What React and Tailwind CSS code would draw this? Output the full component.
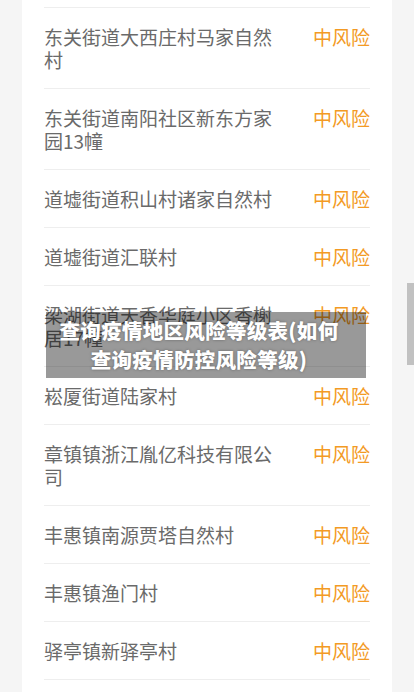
import React from "react";

const rows = [
  "东关街道大西庄村马家自然村",
  "东关街道南阳社区新东方家园13幢",
  "道墟街道积山村诸家自然村",
  "道墟街道汇联村",
  "梁湖街道天香华庭小区香榭居17幢",
  "崧厦街道陆家村",
  "章镇镇浙江胤亿科技有限公司",
  "丰惠镇南源贾塔自然村",
  "丰惠镇渔门村",
  "驿亭镇新驿亭村",
];

export default function App() {
  return (
    <div
      className="relative w-[414px] h-[692px] overflow-hidden bg-[#f5f5f5]"
      style={{ fontFamily: '"Noto Sans CJK SC", "Noto Sans", sans-serif' }}
    >
      <div className="mx-[22px] bg-white px-[22px] h-full">
        <div className="h-[8px] border-b border-[#eeeeee]" />
        {rows.map((r, i) => (
          <div
            key={i}
            className="flex justify-between items-start py-[17px] border-b border-[#eeeeee]"
          >
            <div className="w-[240px] text-[19px] leading-[23px] text-[#6a6a6a]">{r}</div>
            <div className="text-[19px] leading-[23px] text-[#f39a24]">中风险</div>
          </div>
        ))}
      </div>
      <div className="absolute left-[46px] top-[312px] w-[320px] h-[66px] bg-black/40 flex items-center justify-center text-center">
        <div
          className="text-white font-black text-[20.5px] leading-[29px] pr-[14px] tracking-[0.3px]"
          style={{ textShadow: "0 0 3px rgba(0,0,0,0.35)" }}
        >
          查询疫情地区风险等级表(如何
          <br />
          查询疫情防控风险等级)
        </div>
      </div>
      <div className="absolute right-0 top-[283px] w-[7px] h-[82px] bg-[#c1c1c1]" />
    </div>
  );
}
